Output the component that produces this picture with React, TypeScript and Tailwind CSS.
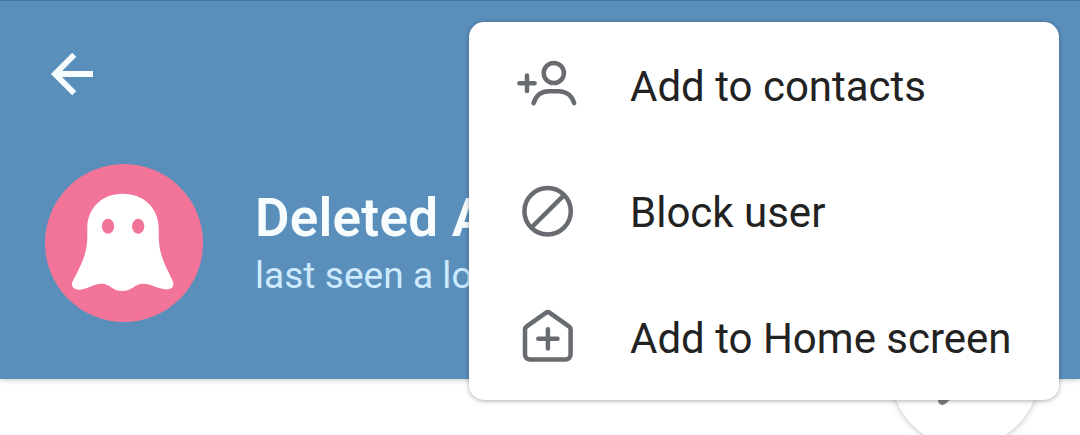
import type { ReactNode } from 'react'

interface MenuItem {
  label: string
  icon: ReactNode
}

const iconProps = {
  width: 64,
  height: 60,
  viewBox: '0 0 64 60',
  fill: 'none',
  stroke: '#686b6f',
  strokeWidth: 4.5,
  strokeLinecap: 'round' as const,
  strokeLinejoin: 'round' as const,
}

const menuItems: MenuItem[] = [
  {
    label: 'Add to contacts',
    icon: (
      <svg {...iconProps}>
        <circle cx="37.8" cy="18" r="10.1" />
        <path d="M17.5 48.2C20 40.5 25.5 36.3 33 36.3h9.5C50 36.3 56 40.5 58.2 48.2" />
        <path d="M3.4 28.3h15.2M11 20.5v15.4" />
      </svg>
    ),
  },
  {
    label: 'Block user',
    icon: (
      <svg {...iconProps}>
        <circle cx="31.6" cy="30.3" r="23.2" />
        <path d="M15.5 46.5l32.3-32.2" />
      </svg>
    ),
  },
  {
    label: 'Add to Home screen',
    icon: (
      <svg {...iconProps}>
        <path d="M29.8 5.9a3.4 3.4 0 0 1 4 0L52.9 19.3a4 4 0 0 1 1.7 3.3v24.9a5 5 0 0 1-5 5H14a5 5 0 0 1-5-5V22.6a4 4 0 0 1 1.7-3.3z" />
        <path d="M22.3 31.8h19.2M31.9 22.2v19.2" />
      </svg>
    ),
  },
]

function GhostAvatar() {
  return (
    <div className="h-[158px] w-[158px] shrink-0 overflow-hidden rounded-full bg-[#f37499]">
      <svg width="158" height="158" viewBox="0 0 158 158">
        <path
          fill="#fff"
          d="M77.7 29.7C57 29.7 42.3 44 42.3 64C42.3 75 42.5 81 40 89.5C37.5 99 32.5 108 28 116.5C25 122 29 126.8 36 125.5C43 124.3 49.5 119.7 56.5 119.7C65.5 119.7 67 127 77.2 127C87.5 127 89 119.7 98.3 119.7C106 119.7 112 124.3 120 125.3C126.5 126.3 130 122 127.6 116.8C123.5 108 118.5 99 116 89.5C113.8 81 113.7 75 113.7 64C113.7 44 98.5 29.7 77.7 29.7Z"
        />
        <ellipse cx="63" cy="62.3" rx="6.2" ry="7.5" fill="#f37499" />
        <ellipse cx="93.2" cy="62.3" rx="6.2" ry="7.5" fill="#f37499" />
      </svg>
    </div>
  )
}

export default function App() {
  return (
    <div className="relative h-[435px] w-full overflow-hidden bg-white font-['Roboto',sans-serif]">
      <header className="h-[379px] border-t border-[#4277a1] bg-[#5a8fbb] shadow-[0_1px_5px_rgba(0,0,0,0.22)]">
        <div className="flex h-[163px] items-start pt-[50px] pl-[48px]">
          <button aria-label="Back">
            <svg width="48" height="48" viewBox="0 0 48 48" fill="none" stroke="#f7fdff" strokeWidth="5.8">
              <path d="M45 23H7M26.2 3.8L7 23l19.2 19.2" />
            </svg>
          </button>
        </div>
        <div className="flex pl-[45px]">
          <GhostAvatar />
          <div className="ml-[52px] pt-[21px] whitespace-nowrap">
            <h1 className="text-[53px] leading-[66px] font-semibold tracking-[0.25px] text-[#f7fdff]">Deleted Account</h1>
            <p className="text-[37px] leading-[50px] tracking-[0.05px] text-[#cdeaff]">last seen a long time ago</p>
          </div>
        </div>
      </header>

      {/* message button, mostly hidden behind the menu */}
      <button
        aria-label="Send message"
        className="absolute top-[299px] left-[891px] h-[148px] w-[148px] rounded-full bg-white shadow-[0_1px_6px_rgba(0,0,0,0.24)]"
      >
        <svg className="absolute top-[74px] left-[38px]" width="48" height="34" viewBox="0 0 48 34">
          <path d="M34 9L13.5 27.5" stroke="#808080" strokeWidth="9" strokeLinecap="round" />
        </svg>
      </button>

      <div className="absolute top-[22px] left-[469px] w-[590px] rounded-[15px] bg-white shadow-[0_1px_5px_rgba(0,0,0,0.32)]">
        {menuItems.map((item) => (
          <button key={item.label} className="flex h-[126px] w-full items-center pl-[47px] text-left">
            {item.icon}
            <span className="ml-[50px] pt-[4px] text-[42px] leading-[50px] whitespace-nowrap text-[#222222]">
              {item.label}
            </span>
          </button>
        ))}
      </div>
    </div>
  )
}
